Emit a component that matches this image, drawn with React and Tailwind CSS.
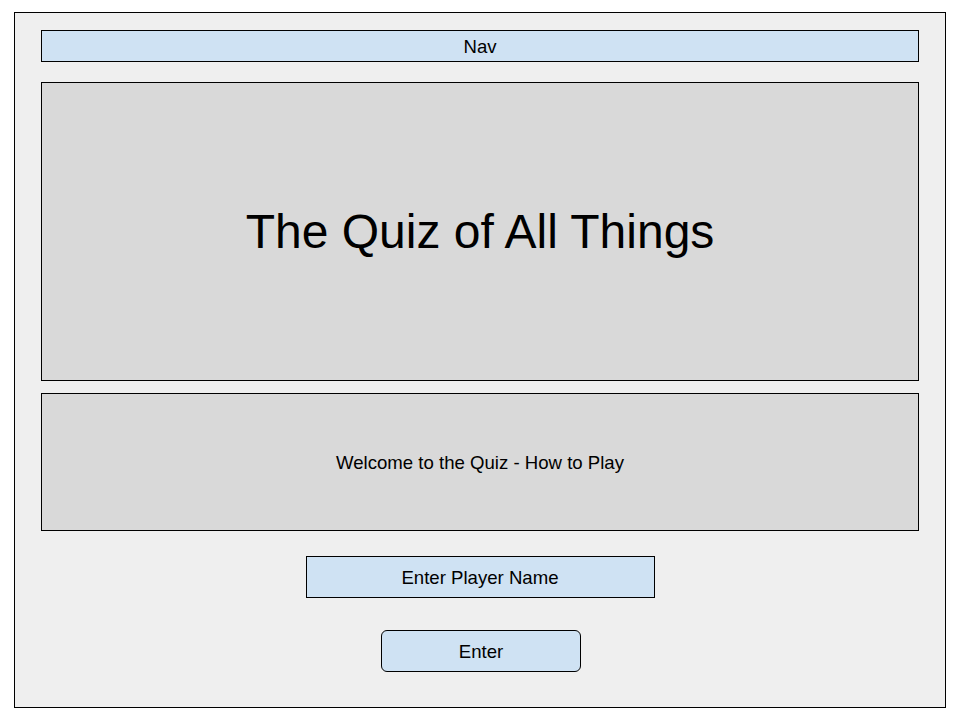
import React, { useState } from "react";

export default function App() {
  const [name, setName] = useState("");

  return (
    <div className="w-[960px] h-[720px] bg-white pt-[12px] pl-[14px] font-['Liberation_Sans',Arial,sans-serif] text-black">
      {/* outer frame */}
      <div className="w-[932px] h-[696px] border border-black bg-[#efefef] px-[26px] pt-[17px] flex flex-col">
        {/* nav */}
        <div className="h-[32px] border border-black bg-[#cfe2f3] flex items-center justify-center text-[18.6px] pt-[1px]">
          Nav
        </div>

        {/* title */}
        <div className="mt-[20px] h-[299px] border border-black bg-[#d9d9d9] flex items-center justify-center">
          <h1 className="text-[48px] leading-none">The Quiz of All Things</h1>
        </div>

        {/* how to play */}
        <div className="mt-[12px] h-[138px] border border-black bg-[#d9d9d9] flex items-center justify-center text-[18.6px] pt-[1px]">
          Welcome to the Quiz - How to Play
        </div>

        {/* player name */}
        <div className="mt-[25px] flex justify-center">
          <div className="w-[349px] h-[42px] border border-black bg-[#cfe2f3] flex items-center justify-center text-[18.6px] pt-[1px]">
            {name || "Enter Player Name"}
          </div>
        </div>

        {/* enter button */}
        <div className="mt-[32px] flex justify-center pl-[2px]">
          <button
            onClick={() => setName(name)}
            className="w-[200px] h-[42px] border border-black rounded-[6px] bg-[#cfe2f3] text-[18.6px] pt-[1px]"
          >
            Enter
          </button>
        </div>
      </div>
    </div>
  );
}
